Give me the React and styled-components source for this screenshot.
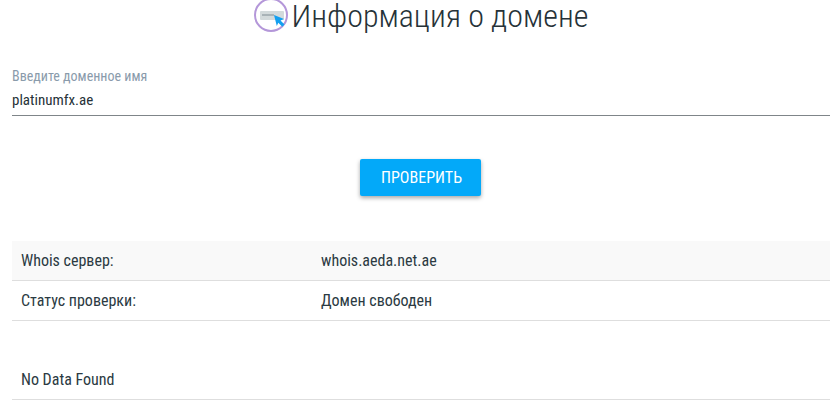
import React from "react";
import styled, { createGlobalStyle } from "styled-components";

const Global = createGlobalStyle`
  html, body { margin: 0; padding: 0; background: #fff; overflow: hidden; height: 400px; }
  body { font-family: Roboto, "Liberation Sans", sans-serif; color: #263238; }
`;
const Page = styled.div`
  width: 818px;
  margin-left: 12px;
  display: flex;
  flex-direction: column;
`;
const Title = styled.h1`
  margin: 0;
  height: 35px;
  display: flex;
  justify-content: center;
  align-items: flex-start;
  gap: 2px;
  font-weight: 300;
  font-size: 32px;
  font-stretch: condensed;
  line-height: 32px;
  color: #263238;
`;
const Field = styled.label`
  display: flex;
  flex-direction: column;
  margin-top: 33px;
  height: 47px;
  border-bottom: 1px solid #7f8589;
`;
const FieldLabel = styled.span`
  font-size: 14px;
  line-height: 17px;
  color: #8a9bab;
  font-stretch: condensed;
`;
const FieldValue = styled.span`
  font-size: 15px;
  line-height: 20px;
  margin-top: 5px;
  color: #263238;
  font-stretch: condensed;
`;
const Actions = styled.div`
  display: flex;
  justify-content: center;
  margin-top: 43px;
  padding-right: 1px;
`;
const CheckButton = styled.button`
  width: 121px;
  height: 37px;
  border: 0;
  border-radius: 2px;
  background: #03a9f9;
  color: #fff;
  font-family: inherit;
  font-size: 16px;
  font-weight: 400;
  font-stretch: condensed;
  box-shadow: 0 2px 4px rgba(0, 0, 0, 0.35);
  padding: 0 0 0 2px;
`;
const Table = styled.div`
  margin-top: 45px;
  display: flex;
  flex-direction: column;
`;
const Row = styled.div`
  display: grid;
  grid-template-columns: 300px 1fr;
  height: 39px;
  flex-shrink: 0;
  align-items: center;
  padding-left: 9px;
  border-bottom: 1px solid #dedede;
  font-size: 16px;
  font-stretch: condensed;
  color: #2b3a42;
  background: ${(p) => (p.$shaded ? "#f9f9f9" : "transparent")};
  margin-top: ${(p) => p.$gap || 0}px;
`;

const Icon = () => (
  <svg width="36" height="35" viewBox="0 0 36 35" aria-hidden="true">
    <circle cx="17" cy="15" r="16" fill="#fff" stroke="#b497d9" strokeWidth="2" />
    <rect x="6" y="11" width="24" height="9" rx="1" fill="#d3dadb" />
    <rect x="8" y="14" width="12" height="2" fill="#a9b3b7" />
    <path d="M20 15l10 4-3.500 1.500 4 4-2.200 2.200-4-4L22.800 26z" fill="#14a0f0" />
  </svg>
);

export default function App() {
  return (
    <>
      <Global />
      <Page>
        <Title>
          <Icon />
          <span>Информация о домене</span>
        </Title>
        <Field>
          <FieldLabel>Введите доменное имя</FieldLabel>
          <FieldValue>platinumfx.ae</FieldValue>
        </Field>
        <Actions>
          <CheckButton>ПРОВЕРИТЬ</CheckButton>
        </Actions>
        <Table>
          <Row $shaded>
            <span>Whois сервер:</span>
            <span>whois.aeda.net.ae</span>
          </Row>
          <Row>
            <span>Статус проверки:</span>
            <span>Домен свободен</span>
          </Row>
          <Row $gap={39}>
            <span>No Data Found</span>
          </Row>
        </Table>
      </Page>
    </>
  );
}
